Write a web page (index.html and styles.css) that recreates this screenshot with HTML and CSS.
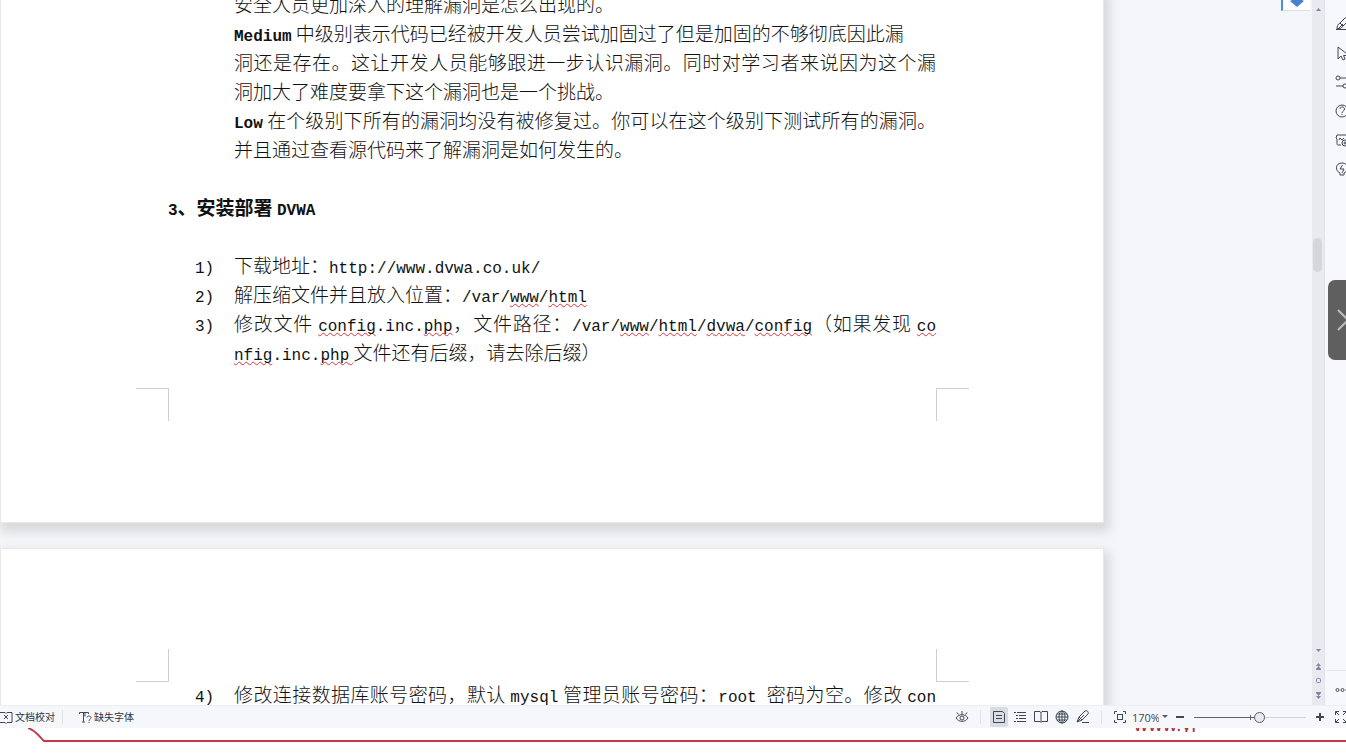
FILE: index.html
```
<!doctype html>
<html lang="zh-CN">

<head>
    <meta charset="utf-8">
    <meta name="viewport" content="width=device-width, initial-scale=1">
    <title>安装部署 DVWA</title>
    <link rel="stylesheet" href="styles.css">
</head>

<body>
    <div class="workspace">
        <main class="document">
            <section class="page first-page">
                <div class="page-body">
                    <p>安全人员更加深入的理解漏洞是怎么出现的。</p>
                    <p><b class="latin">Medium</b> 中级别表示代码已经被开发人员尝试加固过了但是加固的不够彻底因此漏<br>洞还是存在。这让开发人员能够跟进一步认识漏洞。同时对学习者来说因为这个漏洞加大了难度要拿下这个漏洞也是一个挑战。</p>
                    <p><b class="latin">Low</b> 在个级别下所有的漏洞均没有被修复过。你可以在这个级别下测试所有的漏洞。并且通过查看源代码来了解漏洞是如何发生的。</p>
                    <h2><span class="latin">3</span>、安装部署 <span class="latin">DVWA</span></h2>
                    <div class="step"><span class="latin">1)</span>
                        <p>下载地址：<span class="latin">http://www.dvwa.co.uk/</span></p>
                    </div>
                    <div class="step"><span class="latin">2)</span>
                        <p>解压缩文件并且放入位置：<span class="latin">/var/<u>www</u>/<u>html</u></span></p>
                    </div>
                    <div class="step"><span class="latin">3)</span>
                        <p>修改文件 <span class="latin"><u>config</u>.inc.<u>php</u></span>，文件路径：<span class="latin">/var/<u>www</u>/<u>html</u>/<u>dvwa</u>/<u>config</u></span>（如果发现 <span class="latin"><u>co<wbr>nfig</u>.inc.<u>php</u></span><u> </u>文件还有后缀，请去除后缀）</p>
                    </div>
                </div>
                <div class="crop-marks">
                    <i class="mark top right"></i>
                    <i class="mark top left"></i>
                </div>
            </section>
            <section class="page next-page">
                <div class="crop-marks">
                    <i class="mark bottom right"></i>
                    <i class="mark bottom left"></i>
                </div>
                <div class="page-body">
                    <div class="step"><span class="latin">4)</span>
                        <p class="continues">修改连接数据库账号密码，默认 <span class="latin">mysql</span> 管理员账号密码：<span class="latin">root </span>密码为空。修改 <span class="latin">con</span></p>
                    </div>
                </div>
            </section>
            <button type="button" class="float-tab" aria-label="展开">
                <svg width="16" height="8" viewBox="0 0 16 8"><path d="M3 0h10l2 1-7 6-7-6z" fill="#4a7fd0"/></svg>
            </button>
        </main>

        <div class="scrollbar">
            <button type="button" aria-label="向上滚动"><svg width="7" height="4"><path d="M1 4l2.500-3L6 4z"/></svg></button>
            <div class="track"><div class="thumb"></div></div>
            <button type="button" aria-label="向下滚动"><svg width="7" height="4"><path d="M1 0l2.500 3L6 0z"/></svg></button>
            <button type="button" aria-label="上一页"><svg width="7" height="8"><path d="M1 4l2.500-3L6 4zM1 7l2.500-3L6 7zM1 7h5v1H1z"/></svg></button>
            <button type="button" aria-label="选择浏览对象"><svg width="7" height="7"><rect class="hollow" x="1.500" y="1.500" width="4" height="4" rx="1"/></svg></button>
            <button type="button" aria-label="下一页"><svg width="7" height="8"><path d="M1 0h5v1H1zM1 1l2.500 3L6 1zM1 4l2.500 3L6 4z"/></svg></button>
        </div>

        <aside class="sidebar">
            <button type="button" aria-label="编辑"><svg class="icon" viewBox="0 0 16 16"><path d="M1 13.500h15M2 13c0-3 1-5 3-6l5-5c2-1 4 1 3 3l-5 5c-1 2-3 3-6 3zM5 7l3 3M3 13l5-5"/></svg></button>
            <button type="button" aria-label="选择"><svg class="icon" viewBox="0 0 16 16"><path d="M3 2v12l3-3 2 4 2-1-1.500-3.500H14z"/></svg></button>
            <button type="button" aria-label="属性"><svg class="icon" viewBox="0 0 16 16"><circle cx="3" cy="4" r="2"/><path d="M5 4h10M1 12h7"/><circle cx="10" cy="12" r="2"/><path d="M12 12h3"/></svg></button>
            <button type="button" aria-label="帮助"><svg class="icon" viewBox="0 0 16 16"><circle cx="7" cy="8" r="6"/><path d="M5 6c0-3 4.500-2.500 4.500 0C9.500 8 7 8 7 10M7 11v1"/></svg></button>
            <button type="button" aria-label="图片"><svg class="icon" viewBox="0 0 16 16"><path d="M6 13H3c-1 0-1-1-1-2V7L1 6l1-3h12v4M4 8l1-2 2 2 2-2"/><circle cx="10" cy="11" r="3"/><circle cx="10" cy="11" r="1"/></svg></button>
            <button type="button" aria-label="灵感"><svg class="icon" viewBox="0 0 16 16"><path d="M5 12c-5-2-5-10 2-10s7 8 2 10v2H5zM7.500 4L5 8h4l-2 4"/></svg></button>
            <button type="button" class="more" aria-label="更多"><svg class="icon" viewBox="0 0 16 16"><circle cx="2.500" cy="8" r="1.500"/><circle cx="7.500" cy="8" r="1.500"/><circle cx="12.500" cy="8" r="1.500"/></svg></button>
        </aside>

        <button type="button" class="drawer-handle" aria-label="下一张">
            <svg width="12" height="24" viewBox="0 0 12 24"><path d="M1 2l10 10L1 22" fill="none" stroke="#bbb" stroke-width="2"/></svg>
        </button>
    </div>

    <footer class="statusbar">
        <button type="button" class="labelled">
            <svg class="icon" width="13" height="13" viewBox="0 0 13 13"><path d="M0 1.500h5l1 1 1-1h5v10H7l-1 1-1-1H0M4 4l4 4M8 4L4 8"/></svg>
            文档校对
        </button>
        <span class="divider"></span>
        <button type="button" class="labelled">
            <svg class="icon" width="13" height="13" viewBox="0 0 13 13"><path d="M.500 3V1.500h9V3M4.500 1.500v9M6 1.500v4M3 11h3M8 6.500c0-2 4-2 4 0 0 1.500-2 2-2 3.500M10 11v1"/></svg>
            缺失字体
        </button>

        <div class="view-tools">
            <button type="button" aria-label="护眼模式"><svg class="icon" viewBox="0 0 14 14"><path d="M1 8c3-4.500 9-4.500 12 0-3 4.500-9 4.500-12 0zM7 4V1M3.500 4.500L2 2.500M10.500 4.500L12 2.500"/><circle cx="7" cy="8" r="2"/></svg></button>
            <span class="divider"></span>
            <button type="button" class="active" aria-label="页面视图"><svg class="icon" viewBox="0 0 14 14"><path d="M1.500 1.500h9l2 2v9h-11zM4 5.500h6M4 8.500h6"/></svg></button>
            <button type="button" aria-label="大纲"><svg class="icon" viewBox="0 0 14 14"><path d="M1 2.500h2M4 2.500h9M3 5.500h2M6 5.500h7M3 8.500h2M6 8.500h7M1 11.500h2M4 11.500h9"/></svg></button>
            <button type="button" aria-label="阅读版式"><svg class="icon" viewBox="0 0 14 14"><path d="M.500 1.500H6l1 1 1-1h5.500v10H8l-1 1-1-1H.500zM7 2v10"/></svg></button>
            <button type="button" aria-label="Web 版式"><svg class="icon" viewBox="0 0 14 14"><circle cx="7" cy="7" r="6"/><ellipse cx="7" cy="7" rx="3" ry="6"/><path d="M7 1v12M1 7h12M2 4h10M2 10h10"/></svg></button>
            <button type="button" aria-label="写作模式"><svg class="icon" viewBox="0 0 14 14"><path d="M1 12l2-5 6-6c2-1 4 1 3 3l-6 6zM3 7l3 3M2 11l6-6M6 12.500h7"/></svg></button>
            <span class="divider"></span>
            <button type="button" aria-label="最佳显示比例"><svg class="icon" viewBox="0 0 14 14"><path d="M1.500 4V1.500H4M10 1.500h2.500V4M12.500 10v2.500H10M4 12.500H1.500V10"/><rect x="4.500" y="4.500" width="5" height="5"/></svg></button>
            <div class="zoom-level">
                <select aria-label="显示比例"><option>170%</option></select>
                <svg class="caret" width="6" height="4"><path d="M0 0h6L3 3z" fill="#555c6b"/></svg>
            </div>
            <button type="button" aria-label="缩小"><svg class="icon bold" viewBox="0 0 14 14"><path d="M3 7h8"/></svg></button>
            <input type="range" class="zoom-slider" min="0" max="100" value="59" aria-label="缩放">
            <button type="button" aria-label="放大"><svg class="icon bold" viewBox="0 0 14 14"><path d="M3 7h8M7 3v8"/></svg></button>
            <button type="button" aria-label="全屏"><svg class="icon" viewBox="0 0 14 14"><path d="M1.500 5V1.500H5M2 2l3 3M9 1.500h3.500V5M12 2L9 5M1.500 9v3.500H5M2 12l3-3M9 12.500h3.500V9M12 12L9 9"/></svg></button>
        </div>
    </footer>

    <div class="banner">
        <svg class="curve" width="18" height="14" viewBox="0 0 18 14"><path d="M0 0c7 2 11 8 16 13h2" fill="none" stroke="#c23a4c" stroke-width="2"/></svg>
        <div class="banner-line">
            <div class="site"><span>www.yj</span></div>
        </div>
    </div>
</body>

</html>
```

FILE: styles.css
```
* {
    box-sizing: border-box;
}

body {
    margin: 0;
    height: 100vh;
    display: flex;
    flex-direction: column;
    overflow: hidden;
    background: #fff;
    font-family: "Noto Sans CJK SC", sans-serif;
}

button {
    display: flex;
    align-items: center;
    justify-content: center;
    padding: 0;
    border: none;
    background: none;
    color: inherit;
    font: inherit;
    cursor: pointer;
}

.icon {
    flex: none;
    fill: none;
    stroke: #3f4656;
    stroke-width: 1;
}

.icon.bold {
    stroke-width: 2;
}

.workspace {
    position: relative;
    flex: 1;
    min-height: 0;
    display: flex;
}

/* document pages */
.document {
    position: relative;
    flex: 1;
    min-width: 0;
    padding-right: 208px;
    overflow: hidden;
    background: #f4f6f9;
}

.page {
    background: #fff;
    border: 1px solid #e6e8ea;
    box-shadow: 3px 6px 10px 3px #d8d9db;
}

.first-page {
    padding-bottom: 101px;
    border-top: none;
}

.next-page {
    margin-top: 25px;
    padding-top: 100px;
    padding-bottom: 40px;
}

.page-body {
    padding: 0 167px;
    color: #111;
    font-size: 19px;
    font-weight: 300;
    line-height: 29px;
}

.first-page .page-body {
    margin-top: -11px;
    padding-bottom: 22px;
}

.next-page .page-body {
    margin-top: -3px;
}

.page-body p {
    margin: 0 0 0 66px;
    text-align: justify;
}

.page-body h2 {
    margin: 29px 0;
    font-size: 19px;
    font-weight: bold;
}

.latin {
    font-family: "Liberation Mono", monospace;
    font-size: 16px;
    line-height: 1;
}

.page-body b {
    font-weight: bold;
}

.page-body u {
    text-decoration: underline wavy #d8343c 1px;
    text-underline-offset: 1px;
    text-decoration-skip-ink: none;
}

.step {
    display: flex;
    align-items: baseline;
    padding-left: 27px;
}

.step > .latin {
    flex: none;
    width: 39px;
}

.step p {
    flex: 1;
    margin: 0;
}

.page-body .continues {
    text-align-last: justify;
}

.crop-marks {
    display: flex;
    justify-content: space-between;
    padding: 0 134px 0 135px;
}

.mark {
    width: 33px;
    height: 33px;
    border: 0 solid #cfcfcf;
}

.mark.top { border-top-width: 1px; }
.mark.bottom { border-bottom-width: 1px; }
.mark.left { border-left-width: 1px; }
.mark.right { border-right-width: 1px; }

.float-tab {
    position: absolute;
    top: 0;
    right: 2px;
    width: 29px;
    height: 11px;
    align-items: flex-start;
    background: #fff;
    border-left: 2px solid #4a8df0;
    border-bottom: 1px solid #dcdfe4;
}

/* scrollbar */
.scrollbar {
    width: 13px;
    display: flex;
    flex-direction: column;
    padding-bottom: 2px;
    background: #e9eaf0;
    border-right: 1px solid #e2e4ea;
}

.scrollbar button {
    height: 15px;
    fill: #7f879b;
}

.scrollbar button:first-child {
    height: 18px;
}

.scrollbar .hollow {
    fill: none;
    stroke: #7f879b;
}

.track {
    flex: 1;
    padding: 220px 2px 0 1px;
}

.thumb {
    height: 34px;
    border-radius: 5px;
    background: #d6d7db;
}

/* right tool strip */
.sidebar {
    width: 21px;
    display: flex;
    flex-direction: column;
    align-items: flex-start;
    padding: 9px 0 0 10px;
    overflow: hidden;
    background: #f6f8fb;
}

.sidebar .icon {
    width: 16px;
    height: 16px;
}

.sidebar button {
    flex: none;
    height: 29px;
}

.sidebar .more {
    margin-top: auto;
    height: 30px;
}

.sidebar .more::before {
    content: "";
    position: absolute;
    right: 0;
    bottom: 34px;
    width: 19px;
    border-top: 1px solid #dfe2e7;
}

.drawer-handle {
    position: absolute;
    top: 280px;
    right: -12px;
    width: 30px;
    height: 80px;
    border-radius: 7px;
    background: #5f5f5f;
}

/* status bar */
.statusbar {
    position: relative;
    height: 23px;
    display: flex;
    align-items: center;
    background: #f5f7fa;
    border-top: 1px solid #eceef1;
    color: #2c3342;
    font-size: 10px;
    line-height: 20px;
}

.labelled {
    gap: 2px;
}

.divider {
    width: 1px;
    height: 14px;
    margin: 0 16px 0 7px;
    background: #dfe2e7;
}

.view-tools {
    display: flex;
    align-items: center;
    gap: 3px;
    margin-left: auto;
    margin-right: -4px;
}

.view-tools button {
    flex: none;
    width: 18px;
    height: 20px;
}

.view-tools .icon {
    width: 14px;
    height: 14px;
}

.view-tools .divider {
    margin: 0 6px;
}

.view-tools .active {
    background: #d9dde2;
    border-radius: 2px;
}

.zoom-level {
    display: flex;
    align-items: center;
    gap: 3px;
    width: 36px;
}

.zoom-level select {
    width: 27px;
    padding: 0;
    border: none;
    appearance: none;
    background: none;
    color: #3f4656;
    font: 11px "Open Sans", sans-serif;
}

.caret {
    flex: none;
}

.zoom-slider {
    width: 112px;
    height: 12px;
    margin: 0 2px;
    appearance: none;
    background:
        linear-gradient(#596277, #596277) 50% 50% / 1px 5px no-repeat,
        linear-gradient(to right, #596277 58%, #cfd3da 58%) 0 50% / 100% 1px no-repeat;
}

.zoom-slider::-webkit-slider-thumb {
    appearance: none;
    width: 11px;
    height: 11px;
    border: 1px solid #555c6b;
    border-radius: 50%;
    background: #e9ebee;
}

/* strip under the status bar */
.banner {
    height: 26px;
    display: flex;
    align-items: flex-start;
    padding-left: 28px;
}

.curve {
    flex: none;
}

.banner-line {
    flex: 1;
    height: 14px;
    border-bottom: 2px solid #c23a4c;
}

.site {
    height: 4px;
    margin-right: 150px;
    overflow: hidden;
    color: #b8283c;
    font: 20px/20px "Liberation Sans", sans-serif;
    text-align: right;
}

.site span {
    display: block;
    margin-top: -14px;
}
```
